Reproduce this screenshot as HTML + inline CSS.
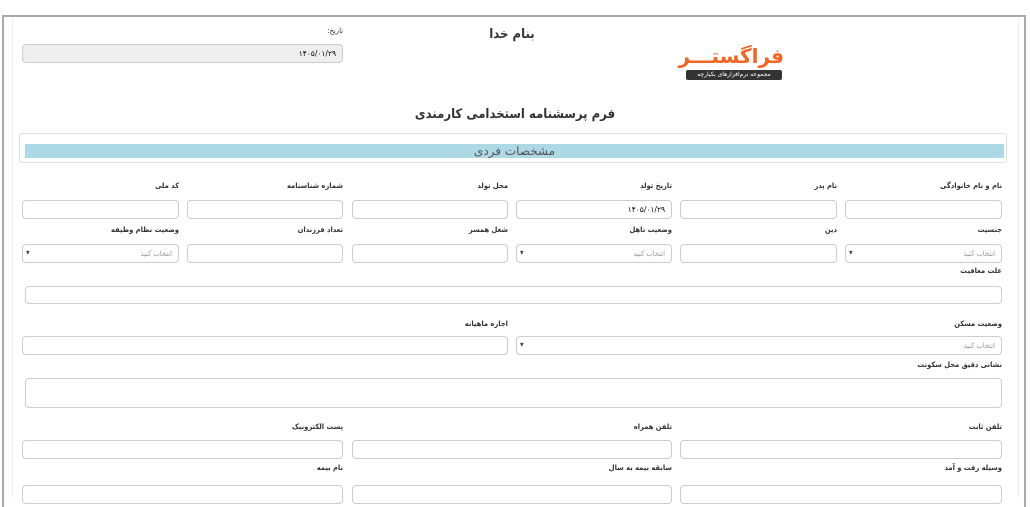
<!DOCTYPE html>
<html><head><meta charset="utf-8"><style>
body{margin:0;width:1030px;height:495px;overflow:hidden;background:#fff;font-family:"DejaVu Sans","Liberation Sans",sans-serif;position:relative}
.a{position:absolute}
.in{position:absolute;box-sizing:border-box;border:1px solid #ccc;border-radius:4px;background:#fff;height:19px}
.lb{position:absolute;font-family:"DejaVu Sans Condensed","DejaVu Sans",sans-serif;font-size:7.5px;font-weight:bold;color:#333;direction:rtl;white-space:nowrap;transform:translateX(-100%)}
.sel{font-family:"DejaVu Sans Condensed","DejaVu Sans",sans-serif;font-size:7.5px;color:#999;direction:rtl;padding:4px 6px 0 0;text-align:right}
.sel:after{content:"▾";position:absolute;left:3px;top:3px;color:#444;font-size:8px}
</style></head><body>
<div class="a" style="left:2px;top:15px;width:1020px;height:490px;border-top:2px solid #aaa;border-left:2px solid #aaa;border-right:2px solid #aaa"></div>
<div class="a" style="left:12px;top:17px;width:1005px;height:480px;border-left:1px solid #eee;border-right:1px solid #eee"></div>

<div class="lb" style="left:343px;top:26px;font-weight:normal">تاریخ:</div>
<div class="in" style="left:22px;top:44px;width:321px;background:#eee;font-size:7.5px;text-align:right;padding:4px 6px 0 0;direction:rtl">۱۴۰۵/۰۱/۲۹</div>
<div class="a" style="left:460px;top:27px;width:104px;text-align:center;font-family:'DejaVu Sans Condensed','DejaVu Sans',sans-serif;font-size:13px;font-weight:bold;color:#333;direction:rtl">بنام خدا</div>
<div class="a" style="left:680px;top:44px;width:104px;text-align:center;font-size:20px;font-weight:bold;color:#f26522;direction:rtl;line-height:24px">فراگستـــر</div>
<div class="a" style="left:686px;top:70px;width:96px;height:10px;background:#333;color:#fff;font-size:6px;text-align:center;line-height:10px;direction:rtl;border-radius:2px">مجموعه نرم‌افزارهای یکپارچه</div>
<div class="a" style="left:350px;top:107px;width:330px;text-align:center;font-family:'DejaVu Sans Condensed','DejaVu Sans',sans-serif;font-size:13px;font-weight:bold;color:#333;direction:rtl">فرم پرسشنامه استخدامی کارمندی</div>
<div class="a" style="left:19px;top:133px;width:988px;height:30px;box-sizing:border-box;border:1px solid #ddd;border-radius:3px"></div>
<div class="a" style="left:25px;top:144px;width:979px;height:14px;background:#add8e6;text-align:center;font-size:12px;line-height:14px;color:#555;direction:rtl">مشخصات فردی</div>

<div class="lb" style="left:1002px;top:181px">نام و نام خانوادگی</div>
<div class="lb" style="left:837px;top:181px">نام پدر</div>
<div class="lb" style="left:672px;top:181px">تاریخ تولد</div>
<div class="lb" style="left:508px;top:181px">محل تولد</div>
<div class="lb" style="left:343px;top:181px">شماره شناسنامه</div>
<div class="lb" style="left:179px;top:181px">کد ملی</div>
<div class="in" style="left:845px;top:200px;width:157px"></div>
<div class="in" style="left:680px;top:200px;width:157px"></div>
<div class="in" style="left:516px;top:200px;width:156px;font-size:7.5px;text-align:right;padding:4px 6px 0 0;direction:rtl">۱۴۰۵/۰۱/۲۹</div>
<div class="in" style="left:352px;top:200px;width:156px"></div>
<div class="in" style="left:187px;top:200px;width:156px"></div>
<div class="in" style="left:22px;top:200px;width:157px"></div>

<div class="lb" style="left:1002px;top:225px">جنسیت</div>
<div class="lb" style="left:837px;top:225px">دین</div>
<div class="lb" style="left:672px;top:225px">وضعیت تاهل</div>
<div class="lb" style="left:508px;top:225px">شغل همسر</div>
<div class="lb" style="left:343px;top:225px">تعداد فرزندان</div>
<div class="lb" style="left:179px;top:225px">وضعیت نظام وظیفه</div>
<div class="in sel" style="left:845px;top:244px;width:157px">انتخاب کنید</div>
<div class="in" style="left:680px;top:244px;width:157px"></div>
<div class="in sel" style="left:516px;top:244px;width:156px">انتخاب کنید</div>
<div class="in" style="left:352px;top:244px;width:156px"></div>
<div class="in" style="left:187px;top:244px;width:156px"></div>
<div class="in sel" style="left:22px;top:244px;width:157px">انتخاب کنید</div>

<div class="lb" style="left:1002px;top:266px">علت معافیت</div>
<div class="in" style="left:25px;top:286px;width:977px;height:18px"></div>

<div class="lb" style="left:1002px;top:319px">وضعیت مسکن</div>
<div class="lb" style="left:508px;top:319px">اجاره ماهیانه</div>
<div class="in sel" style="left:516px;top:336px;width:486px">انتخاب کنید</div>
<div class="in" style="left:22px;top:336px;width:486px"></div>

<div class="lb" style="left:1002px;top:360px">نشانی دقیق محل سکونت</div>
<div class="in" style="left:25px;top:378px;width:977px;height:30px"></div>

<div class="lb" style="left:1002px;top:422px">تلفن ثابت</div>
<div class="lb" style="left:672px;top:422px">تلفن همراه</div>
<div class="lb" style="left:343px;top:422px">پست الکترونیک</div>
<div class="in" style="left:680px;top:440px;width:322px"></div>
<div class="in" style="left:352px;top:440px;width:320px"></div>
<div class="in" style="left:22px;top:440px;width:321px"></div>

<div class="lb" style="left:1002px;top:463px">وسیله رفت و آمد</div>
<div class="lb" style="left:672px;top:463px">سابقه بیمه به سال</div>
<div class="lb" style="left:343px;top:463px">نام بیمه</div>
<div class="in" style="left:680px;top:485px;width:322px"></div>
<div class="in" style="left:352px;top:485px;width:320px"></div>
<div class="in" style="left:22px;top:485px;width:321px"></div>
</body></html>
